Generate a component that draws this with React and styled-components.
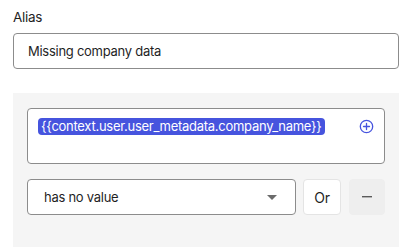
import React from 'react';
import styled, { createGlobalStyle } from 'styled-components';

const Global = createGlobalStyle`
  body {
    margin: 0;
    background: #fff;
    font-family: Inter, "Liberation Sans", sans-serif;
    font-size: 13px;
    letter-spacing: -0.27px;
    color: #1f1f1f;
  }
`;

const Page = styled.div`
  padding: 7px 16px 0 13px;
  width: 386px;
`;

const Label = styled.div`
  font-size: 13.5px;
  line-height: 20px;
  color: #1f1f1f;
  margin-bottom: 6px;
`;

const TextInput = styled.div`
  box-sizing: border-box;
  height: 36px;
  border: 1px solid #8c8c8c;
  border-radius: 4px;
  padding: 0 14px;
  display: flex;
  align-items: center;
  color: #1f1f1f;
`;

const Panel = styled.div`
  margin-top: 24px;
  background: #f5f5f5;
  padding: 15px 14px 40px;
  display: flex;
  flex-direction: column;
  gap: 15px;
`;

const Editor = styled.div`
  box-sizing: border-box;
  height: 56px;
  background: #fff;
  border: 1px solid #8c8c8c;
  border-radius: 4px;
  padding: 9px 10px;
  display: flex;
  align-items: flex-start;
  justify-content: space-between;
`;

const Pill = styled.span`
  background: #4654de;
  color: #fff;
  line-height: 17px;
  padding: 0 3px;
  border-radius: 4px;
`;

const AddIcon = styled.svg`
  margin-top: 1px;
  flex-shrink: 0;
`;

const Row = styled.div`
  display: flex;
  gap: 7px;
  height: 36px;
`;

const Select = styled.div`
  box-sizing: border-box;
  flex: 0 0 269px;
  background: #fff;
  border: 1px solid #8c8c8c;
  border-radius: 4px;
  padding: 0 16px;
  display: flex;
  align-items: center;
  justify-content: space-between;
`;

const Caret = styled.span`
  width: 0;
  height: 0;
  border-left: 5px solid transparent;
  border-right: 5px solid transparent;
  border-top: 5px solid #6b6b6b;
  margin-right: 2px;
`;

const Button = styled.div`
  box-sizing: border-box;
  width: ${p => p.$w}px;
  margin-left: ${p => p.$ml || 0}px;
  border-radius: 4px;
  display: flex;
  align-items: center;
  justify-content: center;
  font-size: 14px;
  background: ${p => (p.$muted ? '#eeeeee' : '#fff')};
  border: 1px solid ${p => (p.$muted ? '#eeeeee' : '#e4e4e4')};
  color: ${p => (p.$muted ? '#6b6b6b' : '#1f1f1f')};
`;

export default function App() {
  return (
    <>
      <Global />
      <Page>
        <Label>Alias</Label>
        <TextInput>Missing company data</TextInput>
        <Panel>
          <Editor>
            <Pill>{'{{context.user.user_metadata.company_name}}'}</Pill>
            <AddIcon width="15" height="15" viewBox="0 0 16 16" fill="none" stroke="#4654de" strokeWidth="1.4" strokeLinecap="round">
              <circle cx="8" cy="8" r="6.6" />
              <path d="M8 4.8v6.4M4.8 8h6.4" />
            </AddIcon>
          </Editor>
          <Row>
            <Select>
              has no value
              <Caret />
            </Select>
            <Button $w={38}>Or</Button>
            <Button $w={36} $ml={1} $muted>
              <svg width="10" height="2" viewBox="0 0 10 2">
                <rect width="10" height="1.4" fill="#5a5a5a" />
              </svg>
            </Button>
          </Row>
        </Panel>
      </Page>
    </>
  );
}
